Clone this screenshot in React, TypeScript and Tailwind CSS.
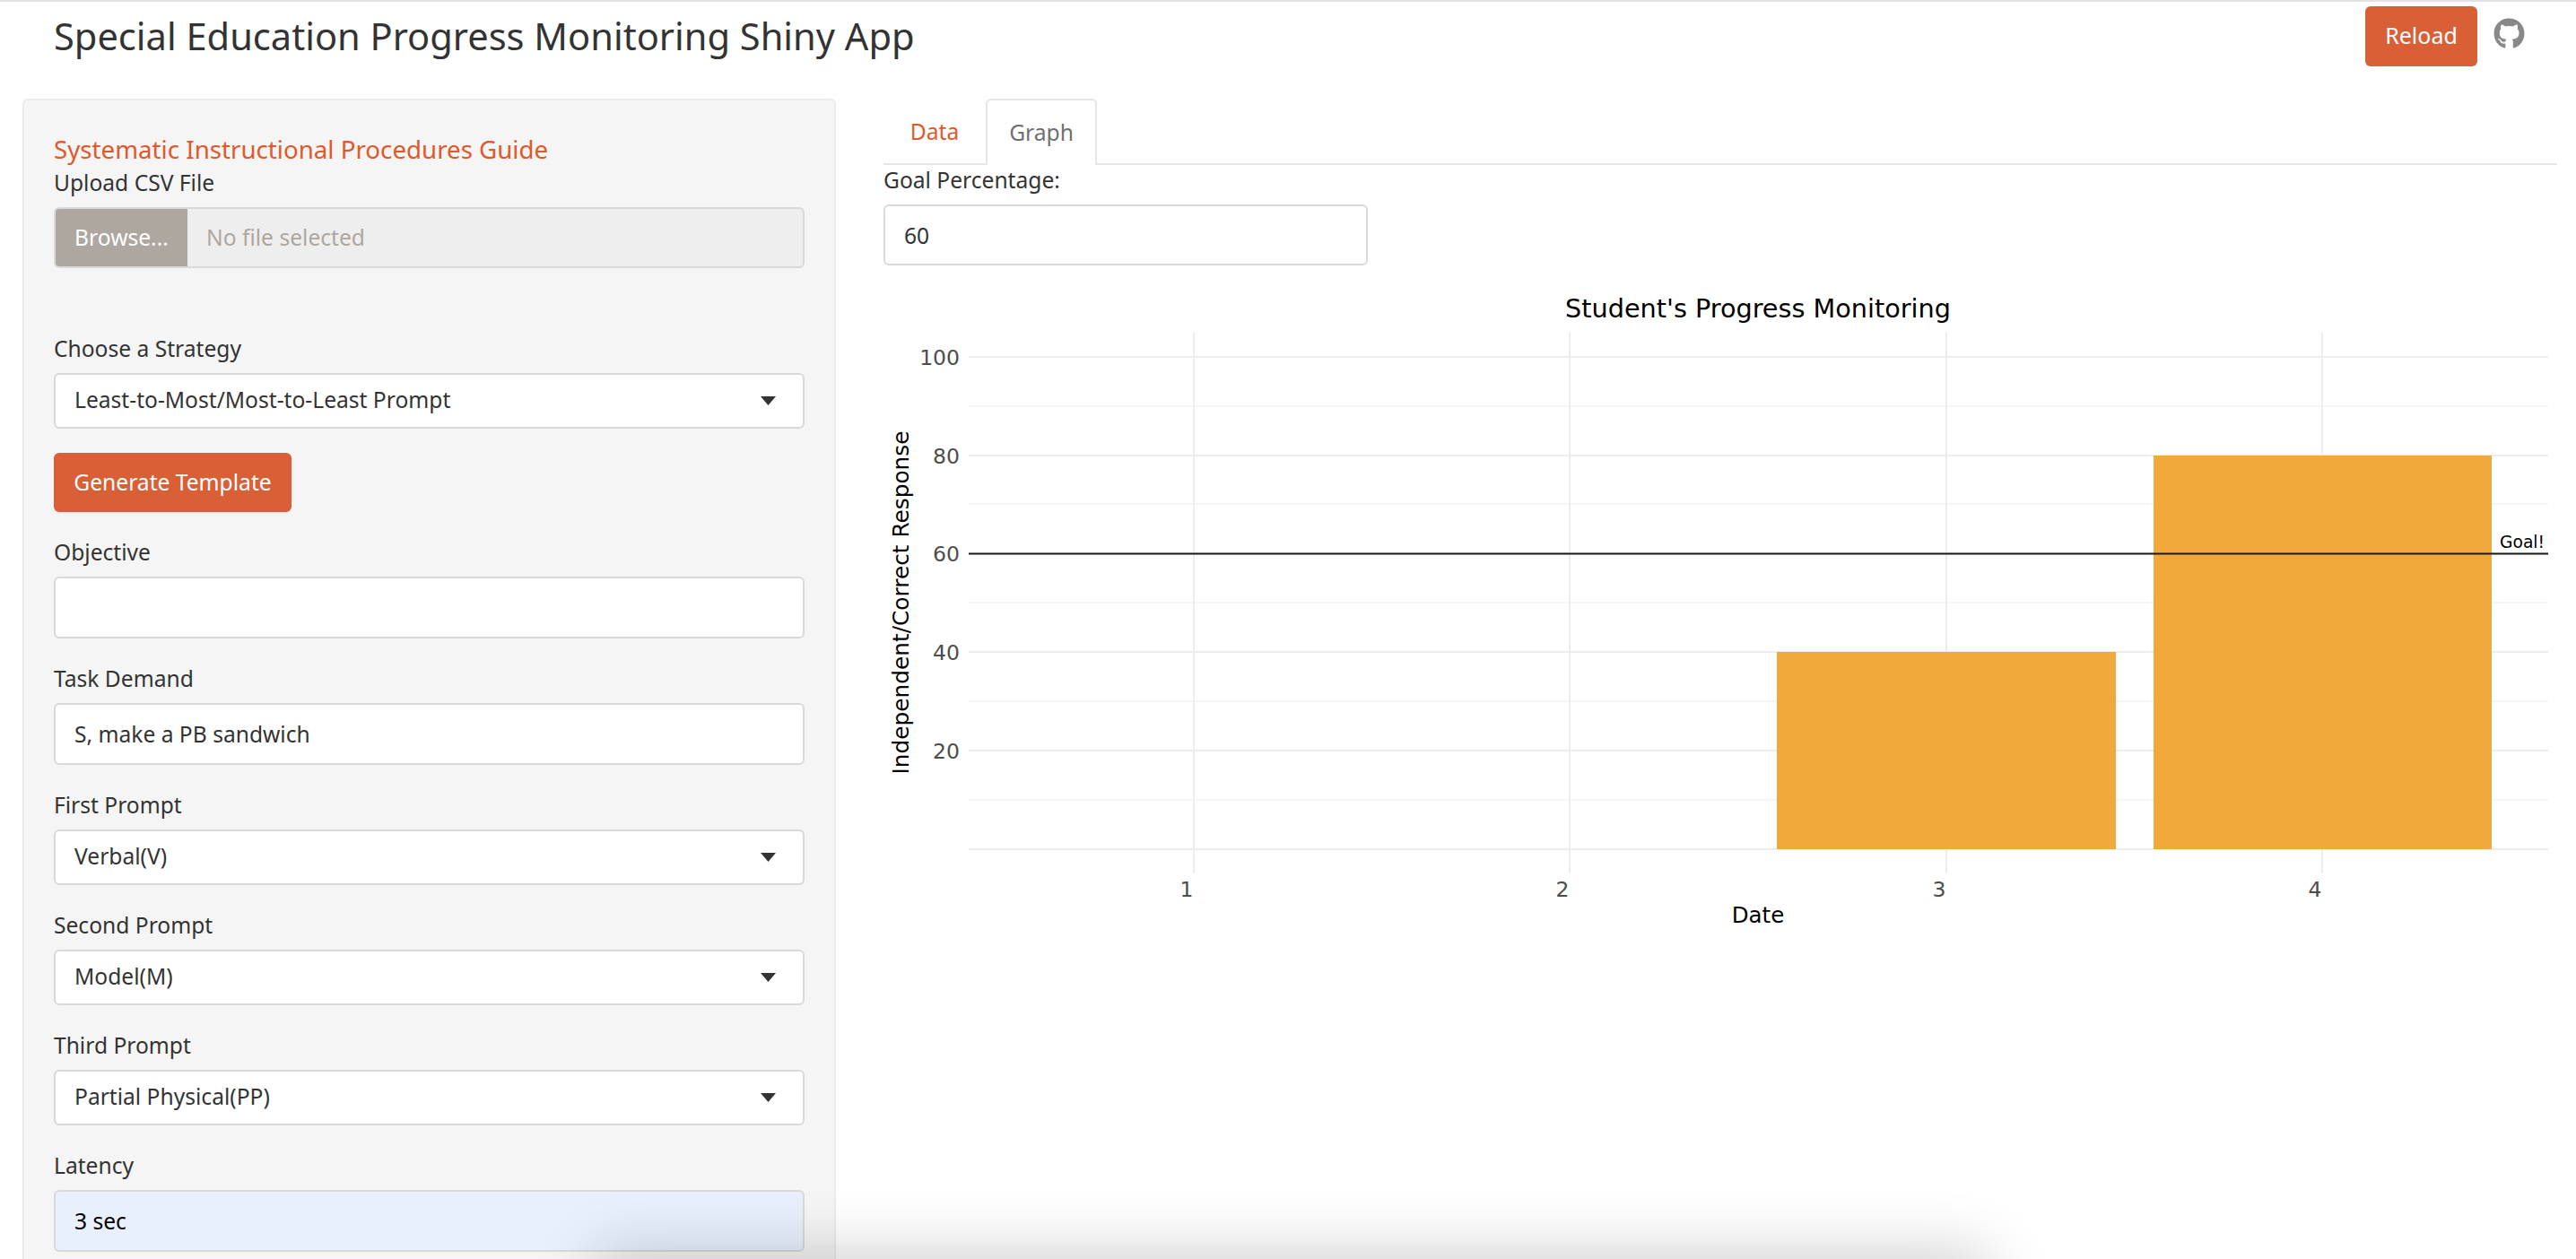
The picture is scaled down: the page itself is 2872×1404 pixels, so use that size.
import React from 'react';
import { FaGithub } from 'react-icons/fa';

const inputClass =
  'w-full rounded-[6px] border-2 border-[#d9d9d9] bg-white px-[21px] text-[#333333] outline-none';

const Field: React.FC<{ label: string; children: React.ReactNode }> = ({ label, children }) => (
  <div className="mb-[28px]">
    <label className="mb-[10px] block text-[24.6px] leading-[34px] text-[#333333]">{label}</label>
    {children}
  </div>
);

const SelectBox: React.FC<{ value: string }> = ({ value }) => (
  <div className="flex h-[62px] items-center justify-between rounded-[6px] border-2 border-[#d9d9d9] bg-white pl-[21px] pr-[30px] text-[24.6px] leading-[34px] text-[#333333]">
    <span className="-translate-y-px">{value}</span>
    <svg width="17" height="10" viewBox="0 0 17 10">
      <path d="M0 0h17L8.5 10z" fill="#333333" />
    </svg>
  </div>
);

const Sidebar: React.FC = () => (
  <aside className="ml-[25px] h-[1294px] w-[907px] shrink-0 overflow-hidden rounded-t-[6px] border-2 border-b-0 border-[#ebebeb] bg-[#f5f5f5] px-[33px] pt-[36px]">
    <a className="block text-[27.7px] leading-[36px] text-[#e0592c]">Systematic Instructional Procedures Guide</a>

    <div className="mt-[3px] mb-[73px]">
      <label className="mb-[10px] block text-[24.6px] leading-[34px] text-[#333333]">Upload CSV File</label>
      <div className="flex h-[68px] overflow-hidden rounded-[6px] border-2 border-[#d9d9d9] bg-[#eeeeee]">
        <button className="w-[147px] shrink-0 bg-[#aea79f] text-[24.6px] text-white">Browse...</button>
        <span className="flex items-center pl-[21px] text-[24.6px] text-[#aea79f]">No file selected</span>
      </div>
    </div>

    <div className="mb-[27px]">
      <label className="mb-[10px] block text-[24.6px] leading-[34px] text-[#333333]">Choose a Strategy</label>
      <SelectBox value="Least-to-Most/Most-to-Least Prompt" />
    </div>

    <button className="mb-[28px] block h-[66px] w-[265px] rounded-[6px] bg-[#d96036] text-[24.6px] text-white">
      Generate Template
    </button>

    <Field label="Objective">
      <input readOnly className={`${inputClass} h-[69px] text-[24.6px]`} />
    </Field>
    <Field label="Task Demand">
      <input readOnly defaultValue="S, make a PB sandwich" className={`${inputClass} h-[69px] text-[24.6px]`} />
    </Field>
    <Field label="First Prompt">
      <SelectBox value="Verbal(V)" />
    </Field>
    <Field label="Second Prompt">
      <SelectBox value="Model(M)" />
    </Field>
    <Field label="Third Prompt">
      <SelectBox value="Partial Physical(PP)" />
    </Field>
    <Field label="Latency">
      <input
        readOnly
        defaultValue="3 sec"
        className="h-[69px] w-full rounded-[6px] border-2 border-[#d9d9d9] bg-[#e8f0fe] px-[21px] text-[24.6px] text-black outline-none"
      />
    </Field>
  </aside>
);

const Y_MAJOR = [397, 507, 616, 726, 836];
const Y_MINOR = [452, 561, 671, 781, 891];
const Y_ZERO = 946;
const X_TICKS = [1331, 1750, 2170, 2589];
const AXIS_TICKS = [
  { label: '100', y: 397 },
  { label: '80', y: 507 },
  { label: '60', y: 616 },
  { label: '40', y: 726 },
  { label: '20', y: 836 },
];

const ProgressChart: React.FC = () => (
  <svg viewBox="985 310 1866 730" width="1866" height="730" className="mt-[15px] block" style={{ fontFamily: '"DejaVu Sans", sans-serif' }}>
    {/* grid */}
    {Y_MAJOR.concat(Y_ZERO).map((y) => (
      <line key={y} x1="1080" x2="2841" y1={y} y2={y} stroke="#ededed" strokeWidth="2" />
    ))}
    {Y_MINOR.map((y) => (
      <line key={y} x1="1080" x2="2841" y1={y} y2={y} stroke="#f2f2f2" strokeWidth="1.5" />
    ))}
    {X_TICKS.map((x) => (
      <line key={x} x1={x} x2={x} y1="370" y2="973" stroke="#ededed" strokeWidth="2" />
    ))}

    {/* bars */}
    <rect x="1981" y="726" width="378" height="220" fill="#f1a93b" />
    <rect x="2401" y="507" width="377" height="439" fill="#f1a93b" />

    {/* goal line */}
    <line x1="1080" x2="2841" y1="616.5" y2="616.5" stroke="#1a1a1a" strokeWidth="2" />
    <text x="2787" y="610" fontSize="18.7" fill="#000000">Goal!</text>

    {/* axes */}
    {AXIS_TICKS.map((t) => (
      <text key={t.label} x="1070" y={t.y + 9} textAnchor="end" fontSize="23.5" fill="#4d4d4d">
        {t.label}
      </text>
    ))}
    {X_TICKS.map((x, i) => (
      <text key={x} x={x - 8} y="999" textAnchor="middle" fontSize="23.5" fill="#4d4d4d">
        {i + 1}
      </text>
    ))}
    <text x="1960" y="1028" textAnchor="middle" fontSize="24.5" fill="#000000">Date</text>
    <text x="1960" y="353" textAnchor="middle" fontSize="28.7" fill="#000000">Student's Progress Monitoring</text>
    <text transform="translate(1013 671) rotate(-90)" textAnchor="middle" fontSize="24.8" fill="#000000">
      Independent/Correct Response
    </text>
  </svg>
);

const GraphPanel: React.FC = () => (
  <main className="ml-[53px] w-[1866px] shrink-0">
    <div className="flex h-[74px] border-b-2 border-[#e6e6e6]">
      <div className="flex h-[74px] w-[114px] items-center justify-center text-[24.6px] text-[#e0592c]">Data</div>
      <div className="flex h-[74px] w-[124px] items-center justify-center rounded-t-[6px] border-2 border-b-0 border-[#e6e6e6] bg-white text-[24.6px] text-[#6f6f6f]">
        Graph
      </div>
    </div>
    <label className="mb-[10px] block text-[24.6px] leading-[34px] text-[#333333]">Goal Percentage:</label>
    <input readOnly defaultValue="60" className="h-[68px] w-[540px] rounded-[6px] border-2 border-[#d9d9d9] bg-white px-[21px] text-[24.6px] text-[#333333] outline-none" />
    <ProgressChart />
  </main>
);

export default function App() {
  return (
    <div
      className="relative h-[1404px] w-[2872px] overflow-hidden border-t-2 border-[#e2e2e2] bg-white"
      style={{ fontFamily: '"Noto Sans", sans-serif' }}
    >
      <header className="flex h-[108px] items-start pl-[60px]">
        <h1 className="mt-[6px] text-[41.6px] leading-[64px] text-[#333333]">
          Special Education Progress Monitoring Shiny App
        </h1>
        <button className="ml-auto mt-[5px] h-[67px] w-[125px] rounded-[6px] bg-[#d96036] pb-[2px] text-[25px] text-white">
          Reload
        </button>
        <FaGithub className="ml-[18px] mr-[57px] mt-[18px] h-[35px] w-[35px] text-[#888888]" />
      </header>

      <div className="flex items-start">
        <Sidebar />
        <GraphPanel />
      </div>

      {/* window shadow coming up from the bottom edge */}
      <div className="pointer-events-none absolute bottom-[-50px] left-[680px] h-[40px] w-[1520px] shadow-[0_0_70px_16px_rgba(0,0,0,0.2)]" />
    </div>
  );
}
